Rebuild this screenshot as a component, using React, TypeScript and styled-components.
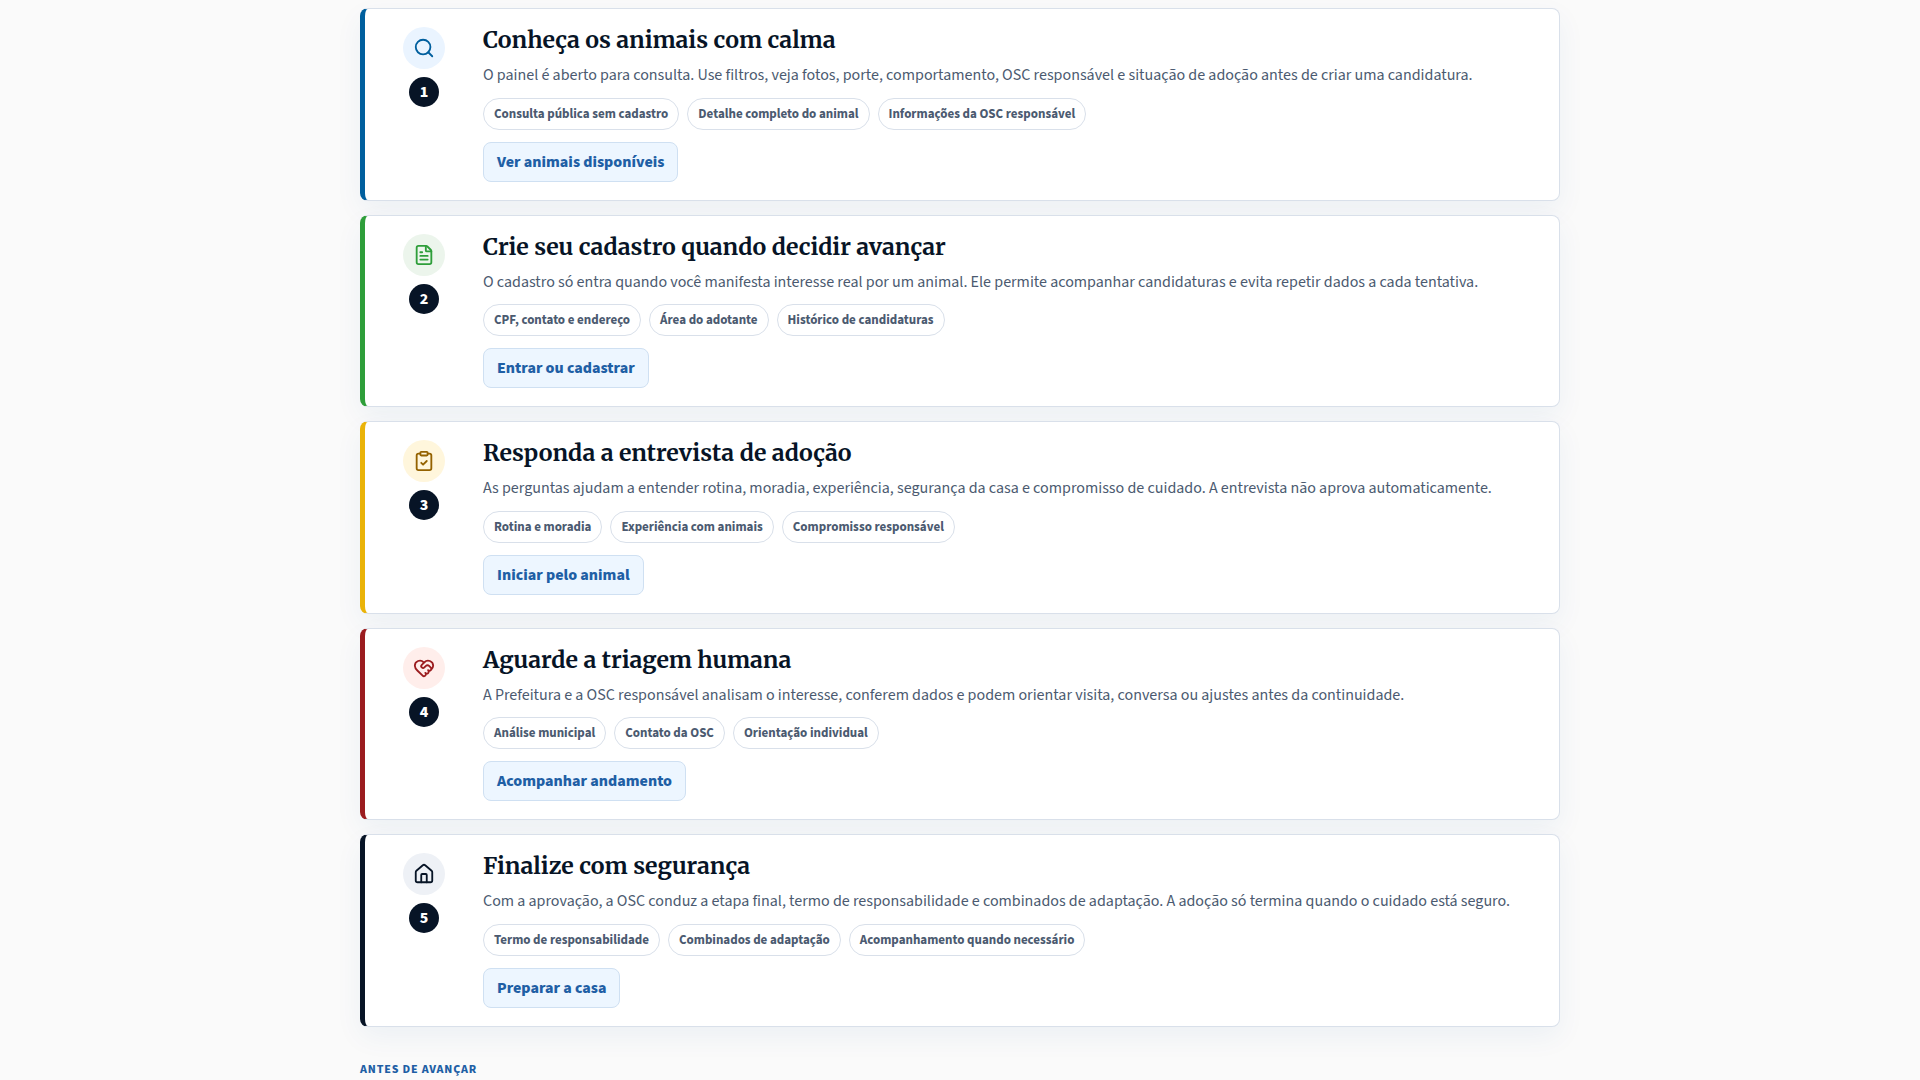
import React from 'react';
import styled, { createGlobalStyle } from 'styled-components';
import { Search, FileText, ClipboardCheck, HeartHandshake, House } from 'lucide-react';
import type { LucideIcon } from 'lucide-react';

const sans = `'Source Sans 3', 'Noto Sans', sans-serif`;
const serif = `Merriweather, 'DejaVu Serif', serif`;

const GlobalStyle = createGlobalStyle`
  *, *::before, *::after { box-sizing: border-box; }
  body {
    margin: 0;
    background: #fafafa;
    color: #4b5a70;
    font-family: ${sans};
  }
`;

const Page = styled.main`
  max-width: 1240px;
  margin: 0 auto;
  padding: 8px 20px 0;
`;

const Steps = styled.ol`
  display: grid;
  gap: 14px;
  margin: 0;
  padding: 0;
  list-style: none;
`;

const Card = styled.li<{ $accent: string }>`
  display: grid;
  grid-template-columns: 82px minmax(0, 1fr);
  gap: 18px;
  padding: 18px;
  background: #ffffff;
  border: 1px solid #d9e0ea;
  border-left: 5px solid ${(p) => p.$accent};
  border-radius: 8px;
  box-shadow: 0 10px 28px rgba(20, 80, 160, 0.06);
`;

const Marker = styled.div`
  display: flex;
  flex-direction: column;
  align-items: center;
  gap: 8px;
`;

const IconDisc = styled.span<{ $color: string; $tint: string }>`
  display: grid;
  place-items: center;
  width: 42px;
  height: 42px;
  border-radius: 50%;
  color: ${(p) => p.$color};
  background: ${(p) => p.$tint};
`;

const StepNumber = styled.span`
  display: grid;
  place-items: center;
  width: 30px;
  height: 30px;
  border-radius: 50%;
  color: #ffffff;
  background: #071426;
  font-size: 16px;
  font-weight: 800;
  line-height: 24px;
`;

const Content = styled.div`
  display: flex;
  flex-direction: column;
  align-items: flex-start;
`;

const Title = styled.h2`
  margin: 0;
  color: #071426;
  font-family: ${serif};
  font-size: 23px;
  font-weight: 700;
  line-height: 26px;
`;

const Description = styled.p`
  margin: 10px 0 9px;
  font-size: 16px;
  line-height: 1.6;
`;

const Tags = styled.ul`
  display: flex;
  flex-wrap: wrap;
  gap: 8px;
  margin: 0;
  padding: 0;
  list-style: none;
`;

const Tag = styled.li`
  display: flex;
  align-items: center;
  height: 32px;
  padding: 0 10px;
  border: 1px solid #d9e0ea;
  border-radius: 16px;
  font-size: 13px;
  font-weight: 700;
  line-height: 20px;
`;

const Action = styled.a`
  display: inline-flex;
  align-items: center;
  height: 40px;
  margin-top: 12px;
  padding: 0 13px;
  border: 1px solid #cfe0f2;
  border-radius: 8px;
  color: #1f5fa5;
  background: #edf6ff;
  font-size: 16px;
  font-weight: 800;
  line-height: 24px;
  text-decoration: none;
`;

const Eyebrow = styled.p`
  margin: 32px 0 0;
  color: #1f5fa5;
  font-size: 12px;
  font-weight: 800;
  line-height: 22px;
  letter-spacing: 0.07em;
  text-transform: uppercase;
`;

interface Step {
  title: string;
  text: string;
  tags: string[];
  action: string;
  icon: LucideIcon;
  accent: string;
  color: string;
  tint: string;
}

const steps: Step[] = [
  {
    title: 'Conheça os animais com calma',
    text: 'O painel é aberto para consulta. Use filtros, veja fotos, porte, comportamento, OSC responsável e situação de adoção antes de criar uma candidatura.',
    tags: ['Consulta pública sem cadastro', 'Detalhe completo do animal', 'Informações da OSC responsável'],
    action: 'Ver animais disponíveis',
    icon: Search,
    accent: '#005f9e',
    color: '#005f9e',
    tint: '#eaf4ff',
  },
  {
    title: 'Crie seu cadastro quando decidir avançar',
    text: 'O cadastro só entra quando você manifesta interesse real por um animal. Ele permite acompanhar candidaturas e evita repetir dados a cada tentativa.',
    tags: ['CPF, contato e endereço', 'Área do adotante', 'Histórico de candidaturas'],
    action: 'Entrar ou cadastrar',
    icon: FileText,
    accent: '#2e9e3a',
    color: '#2e9e3a',
    tint: '#ecf5ec',
  },
  {
    title: 'Responda a entrevista de adoção',
    text: 'As perguntas ajudam a entender rotina, moradia, experiência, segurança da casa e compromisso de cuidado. A entrevista não aprova automaticamente.',
    tags: ['Rotina e moradia', 'Experiência com animais', 'Compromisso responsável'],
    action: 'Iniciar pelo animal',
    icon: ClipboardCheck,
    accent: '#eab308',
    color: '#946200',
    tint: '#fff6dc',
  },
  {
    title: 'Aguarde a triagem humana',
    text: 'A Prefeitura e a OSC responsável analisam o interesse, conferem dados e podem orientar visita, conversa ou ajustes antes da continuidade.',
    tags: ['Análise municipal', 'Contato da OSC', 'Orientação individual'],
    action: 'Acompanhar andamento',
    icon: HeartHandshake,
    accent: '#9b1c1f',
    color: '#9b1c1f',
    tint: '#ffeeeb',
  },
  {
    title: 'Finalize com segurança',
    text: 'Com a aprovação, a OSC conduz a etapa final, termo de responsabilidade e combinados de adaptação. A adoção só termina quando o cuidado está seguro.',
    tags: ['Termo de responsabilidade', 'Combinados de adaptação', 'Acompanhamento quando necessário'],
    action: 'Preparar a casa',
    icon: House,
    accent: '#071426',
    color: '#071426',
    tint: '#eef1f6',
  },
];

export default function App() {
  return (
    <>
      <GlobalStyle />
      <Page>
        <Steps>
          {steps.map((step, index) => {
            const Icon = step.icon;
            return (
              <Card key={step.title} $accent={step.accent}>
                <Marker>
                  <IconDisc $color={step.color} $tint={step.tint}>
                    <Icon size={22} aria-hidden="true" />
                  </IconDisc>
                  <StepNumber>{index + 1}</StepNumber>
                </Marker>
                <Content>
                  <Title>{step.title}</Title>
                  <Description>{step.text}</Description>
                  <Tags>
                    {step.tags.map((tag) => (
                      <Tag key={tag}>{tag}</Tag>
                    ))}
                  </Tags>
                  <Action href="#">{step.action}</Action>
                </Content>
              </Card>
            );
          })}
        </Steps>
        <Eyebrow>Antes de avançar</Eyebrow>
      </Page>
    </>
  );
}
